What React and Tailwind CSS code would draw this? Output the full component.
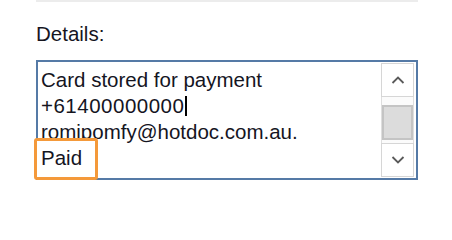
function Chevron({ up }) {
  return (
    <svg width="14" height="8" viewBox="0 0 14 8" fill="none">
      <path
        d={up ? "M1.5 7L7 1.5L12.5 7" : "M1.5 1L7 6.5L12.5 1"}
        stroke="#5a5a5a"
        strokeWidth="1.8"
      />
    </svg>
  )
}

function ScrollBar() {
  return (
    <div className="flex flex-col w-[33px] mr-[2px] my-[1px]">
      <div className="h-[34px] border border-[#d6d6d6] bg-white flex items-center justify-center">
        <Chevron up />
      </div>
      <div className="flex-1 border-x border-[#dedede] bg-[#fbfbfb] flex flex-col">
        <div className="mt-[8px] h-[35px] border-2 border-[#c4c4c4] bg-[#dcdcdc]"></div>
      </div>
      <div className="h-[34px] border border-[#d6d6d6] bg-white flex items-center justify-center">
        <Chevron />
      </div>
    </div>
  )
}

export default function App() {
  return (
    <div
      className="w-[452px] h-[214px] bg-white pl-[36px] text-[#15151f]"
      style={{ fontFamily: '"Liberation Sans", Arial, sans-serif' }}
    >
      <div className="w-[382px] h-[2px] bg-[#ececec]"></div>
      <p className="mt-[19px] text-[20.5px] leading-[26px]">Details:</p>
      <div className="mt-[13px] w-[382px] h-[120px] border-2 border-[#557aa6] bg-white flex">
        <div className="relative flex-1 pt-[5px] pl-[3px] text-[20.5px] leading-[26px] whitespace-nowrap">
          <div>Card stored for payment</div>
          <div className="flex items-center">
            <span className="tracking-[0.5px]">+61400000000</span>
            <span className="inline-block ml-[1px] w-[1.5px] h-[20px] bg-black"></span>
          </div>
          <div>romipomfy@hotdoc.com.au.</div>
          <div className="absolute left-[-4px] top-[76px] w-[64px] h-[42px] border-[3px] border-[#f4993a] rounded-[3px] bg-white"></div>
          <div className="relative">Paid</div>
        </div>
        <ScrollBar />
      </div>
    </div>
  )
}
